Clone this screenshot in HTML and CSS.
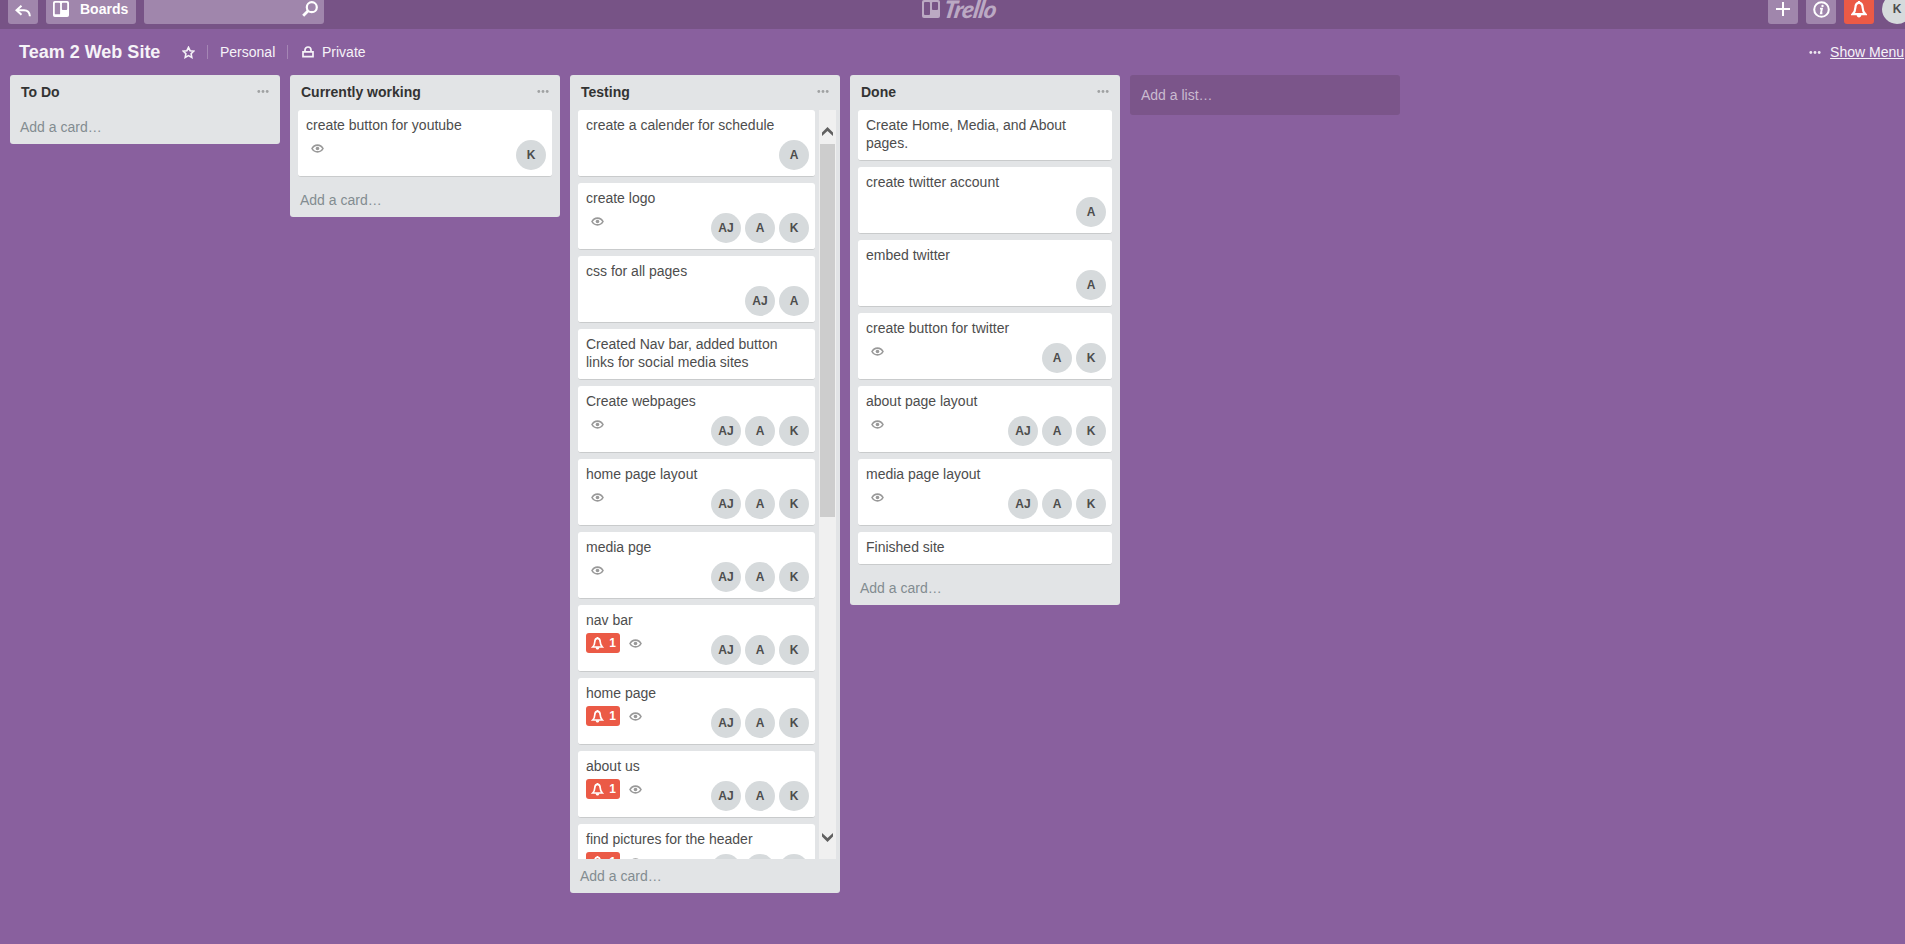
FILE: index.html
```html
<!DOCTYPE html>
<html lang="en">
<head>
<meta charset="utf-8">
<title>Team 2 Web Site | Trello</title>
<link rel="stylesheet" href="styles.css">
</head>
<body>
<svg class="defs" aria-hidden="true">
  <symbol id="eye" viewBox="0 0 13 9"><path d="M1 4.500C2.200 2.200 4.200 1.100 6.500 1.100S10.800 2.200 12 4.500C10.800 6.800 8.800 7.900 6.500 7.900S2.200 6.800 1 4.500Z" fill="none" stroke="currentColor" stroke-width="1.600"/><circle cx="6.500" cy="4.500" r="1.800" fill="currentColor"/></symbol>
  <symbol id="bell" viewBox="0 0 16 17"><path d="M8 1.800C5.300 1.800 4.500 4 4.400 6.500C4.300 9.600 3.500 11.300 1.700 13.100H14.300C12.500 11.300 11.700 9.600 11.600 6.500C11.500 4 10.700 1.800 8 1.800Z" fill="none" stroke="currentColor" stroke-width="2.200"/><path d="M6.900 0h2.200v2H6.900zM5.600 13.500h4.800c0 4-4.800 4-4.800 0Z" fill="currentColor"/></symbol>
  <symbol id="dots" viewBox="0 0 12 3"><circle cx="1.800" cy="1.500" r="1.400"/><circle cx="6" cy="1.500" r="1.400"/><circle cx="10.200" cy="1.500" r="1.400"/></symbol>
  <symbol id="board" viewBox="0 0 18 18"><path fill-rule="evenodd" d="M2 0h14a2 2 0 0 1 2 2v14a2 2 0 0 1-2 2H2a2 2 0 0 1-2-2V2a2 2 0 0 1 2-2ZM3 2a1 1 0 0 0-1 1v11a1 1 0 0 0 1 1h4a1 1 0 0 0 1-1V3a1 1 0 0 0-1-1ZM11 2a1 1 0 0 0-1 1v6a1 1 0 0 0 1 1h4a1 1 0 0 0 1-1V3a1 1 0 0 0-1-1Z"/></symbol>
</svg>

<header class="topbar">
  <a class="btn btn-square"><svg class="back" viewBox="0 0 16 12"><path d="M6.500.8 1.500 5.300l5 4.500M1.500 5.300H9c3.400 0 5.600 2 5.900 6" fill="none" stroke="currentColor" stroke-width="2"/></svg></a>
  <a class="btn boards"><svg class="boards-icon"><use href="#board"/></svg><span>Boards</span></a>
  <div class="btn search"><svg class="search-icon" viewBox="0 0 16 16"><circle cx="9.800" cy="6.200" r="5" fill="none" stroke="currentColor" stroke-width="2.200"/><path d="M6.200 9.800 1.200 14.800" stroke="currentColor" stroke-width="2.800"/></svg></div>
  <div class="logo"><svg class="logo-icon"><use href="#board"/></svg><span class="logo-text">Trello</span></div>
  <div class="actions">
    <a class="btn btn-square"><svg class="plus" viewBox="0 0 14 14"><path d="M7 0v14M0 7h14" stroke="currentColor" stroke-width="2"/></svg></a>
    <a class="btn btn-square"><svg class="info" viewBox="0 0 17 17"><circle cx="8.500" cy="8.500" r="7.300" fill="none" stroke="currentColor" stroke-width="2"/><path d="M7 7.600h1.900L7.900 12.200H9.400" fill="none" stroke="currentColor" stroke-width="1.900"/><circle cx="9.500" cy="4.900" r="1.200" fill="currentColor"/></svg></a>
    <a class="btn btn-square alert"><svg class="bell-lg"><use href="#bell"/></svg></a>
    <span class="avatar me">K</span>
  </div>
</header>

<nav class="boardbar">
  <h1 class="board-name">Team 2 Web Site</h1>
  <svg class="star" viewBox="0 0 13 13"><path d="M6.500 1.300 8.100 4.700 11.800 5.100 9.100 7.700 9.800 11.400 6.500 9.600 3.200 11.400 3.900 7.700 1.200 5.100 4.900 4.700Z" fill="none" stroke="currentColor" stroke-width="1.600"/></svg>
  <span class="sep"></span>
  <span class="org">Personal</span>
  <span class="sep"></span>
  <svg class="lock" viewBox="0 0 12 12"><path d="M1 5.800h10v4.800H1zM3 5.500V4a3 3 0 0 1 6 0v1.500" fill="none" stroke="currentColor" stroke-width="1.700"/></svg>
  <span class="vis">Private</span>
  <svg class="dots menu-dots"><use href="#dots"/></svg>
  <a class="show-menu">Show Menu</a>
</nav>

<main class="lists" id="lists"></main>
<script src="board.js"></script>
</body>
</html>
```

FILE: styles.css
```css
* { box-sizing: border-box; }

body {
  margin: 0;
  height: 944px;
  overflow: hidden;
  background: #89609e;
  color: #4d4d4d;
  font: 14px/18px "Liberation Sans", Arial, sans-serif;
}

svg { display: block; flex: none; }
.defs { position: absolute; width: 0; height: 0; }

/* Top bar */
.topbar {
  display: grid;
  grid-template-columns: 30px 90px 180px 1fr auto;
  grid-template-rows: 24px;
  column-gap: 8px;
  align-items: end;
  height: 29px;
  padding: 0 0 5px 8px;
  overflow: hidden;
  background: #775386;
}
.btn {
  display: flex;
  align-items: center;
  height: 30px;
  border-radius: 3px;
  background: #a086ac;
  color: #fff;
}
.btn-square { width: 30px; justify-content: center; }
.back { width: 16px; height: 12px; margin-top: 3px; }
.boards { padding-left: 7px; font-size: 14px; font-weight: bold; }
.boards-icon { width: 16px; height: 16px; }
.boards-icon, .logo-icon { fill: currentColor; }
.boards span { margin-left: 11px; }
.search { justify-content: flex-end; padding-right: 6px; }
.search-icon { width: 16px; height: 16px; }
.logo {
  display: flex;
  align-items: center;
  height: 30px;
  padding-left: 590px;
  color: #bba9c3;
}
.logo-icon { width: 18px; height: 18px; }
.logo-text {
  margin-left: 4px;
  font: italic 900 24px/24px Lato, sans-serif;
  letter-spacing: -0.6px;
  transform: skewX(-10deg);
}
.actions { display: flex; gap: 8px; width: 137px; }
.actions > * { flex: none; }
.plus { width: 14px; height: 14px; }
.info { width: 17px; height: 17px; }
.alert { background: #eb5a46; }
.bell-lg { width: 16px; height: 17px; }

.avatar {
  width: 30px;
  height: 30px;
  border-radius: 50%;
  background: #d6dadc;
  color: #4d4d4d;
  font-size: 12px;
  font-weight: bold;
  line-height: 30px;
  text-align: center;
}

/* Board bar */
.boardbar {
  display: flex;
  align-items: center;
  height: 46px;
  padding: 0 1px 0 19px;
  color: #f6f3f8;
}
.board-name { width: 163px; margin: 0; font-size: 18px; line-height: 24px; }
.star { width: 13px; height: 13px; }
.sep { width: 1px; height: 14px; margin: 0 12px; background: #a586b5; }
.org { width: 55px; }
.lock { width: 12px; height: 12px; margin: 0 8px 0 2px; }
.dots { width: 12px; height: 3px; fill: #a0a2a3; }
.menu-dots { margin-left: auto; fill: #eee8f1; }
.show-menu { margin-left: 9px; text-decoration: underline; }

/* Lists */
.lists { display: flex; align-items: flex-start; gap: 10px; padding-left: 10px; }
.list {
  flex: none;
  width: 270px;
  border-radius: 3px;
  background: #e2e4e6;
}
.list-head {
  display: flex;
  align-items: center;
  justify-content: space-between;
  height: 35px;
  padding: 0 11px 2px 11px;
}
.list-head h2 { margin: 0; color: #333; font-size: 14px; line-height: 18px; }
.list-body { display: flex; padding: 0 8px; }
.cards { flex: 1; min-width: 0; }
.add-card { height: 34px; padding: 8px 10px; color: #838c91; }
.add-list {
  flex: none;
  width: 270px;
  height: 40px;
  padding: 11px;
  border-radius: 3px;
  background: #7b558a;
  color: #cabbd0;
}

.card {
  min-height: 33px;
  margin-bottom: 6px;
  padding: 6px 6px 8px 8px;
  border-bottom: 1px solid #c9cbcc;
  border-radius: 3px;
  background: #fff;
}
.card.tall { height: 67px; padding-bottom: 0; }
.card-foot { display: flex; align-items: flex-start; height: 36px; padding-top: 4px; }
.badges { display: flex; align-items: center; height: 20px; }
.eye { width: 13px; height: 9px; margin-left: 5px; color: #999; }
.notice {
  display: flex;
  align-items: center;
  justify-content: space-between;
  width: 34px;
  height: 20px;
  padding: 0 4px 0 5px;
  border-radius: 3px;
  background: #eb5a46;
  color: #fff;
  font-size: 12px;
  font-weight: bold;
}
.bell-sm { width: 13px; height: 13px; }
.notice + .eye { margin-left: 9px; }
.members { display: flex; gap: 4px; margin: 2px 0 0 auto; }

/* Scrolling list */
.scrolling .list-body { height: 749px; padding-right: 4px; overflow: hidden; }
.scrollbar {
  display: flex;
  flex-direction: column;
  align-items: center;
  width: 17px;
  margin-left: 4px;
  background: #f0f0f0;
}
.thumb { width: 15px; height: 373px; margin: 8px 0 auto; background: #cdcdcd; }
.arrow { width: 11px; height: 9px; margin-top: 17px; color: #606060; }
.arrow.down { margin: 0 0 17px; transform: scaleY(-1); }
```

FILE: board.js
```js
const all = ["AJ", "A", "K"];
// Card fields: title, members, watched, unread notifications
const lists = [
  { name: "To Do", cards: [] },
  { name: "Currently working", cards: [["create button for youtube", ["K"], true]] },
  { name: "Testing", scrolling: true, cards: [
    ["create a calender for schedule", ["A"]],
    ["create logo", all, true],
    ["css for all pages", ["AJ", "A"]],
    ["Created Nav bar, added button links for social media sites"],
    ["Create webpages", all, true],
    ["home page layout", all, true],
    ["media pge", all, true],
    ["nav bar", all, true, 1],
    ["home page", all, true, 1],
    ["about us", all, true, 1],
    ["find pictures for the header", all, true, 1]
  ] },
  { name: "Done", cards: [
    ["Create Home, Media, and About pages."],
    ["create twitter account", ["A"]],
    ["embed twitter", ["A"]],
    ["create button for twitter", ["A", "K"], true],
    ["about page layout", all, true],
    ["media page layout", all, true],
    ["Finished site"]
  ] }
];

function card([title, members, watched, unread]) {
  if (!members) return `<article class="card"><div>${title}</div></article>`;
  const notice = unread ? `<span class="notice"><svg class="bell-sm"><use href="#bell"/></svg>${unread}</span>` : "";
  const eye = watched ? `<svg class="eye"><use href="#eye"/></svg>` : "";
  const people = members.map(m => `<span class="avatar">${m}</span>`).join("");
  return `<article class="card tall"><div>${title}</div><div class="card-foot"><div class="badges">${notice}${eye}</div><div class="members">${people}</div></div></article>`;
}

const chevron = `<path d="M0 9V5.500L5.500 0l5.500 5.500V9L5.500 4Z" fill="currentColor"/>`;
const scrollbar = `<div class="scrollbar"><svg class="arrow" viewBox="0 0 11 9">${chevron}</svg><div class="thumb"></div><svg class="arrow down" viewBox="0 0 11 9">${chevron}</svg></div>`;

document.getElementById("lists").innerHTML = lists.map(l => `
<section class="list${l.scrolling ? " scrolling" : ""}">
  <div class="list-head"><h2>${l.name}</h2><svg class="dots"><use href="#dots"/></svg></div>
  <div class="list-body"><div class="cards">${l.cards.map(card).join("")}</div>${l.scrolling ? scrollbar : ""}</div>
  <div class="add-card">Add a card…</div>
</section>`).join("") + `<div class="add-list">Add a list…</div>`;
```
